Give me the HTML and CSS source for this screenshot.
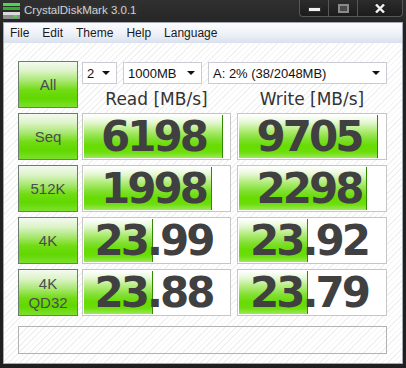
FILE: index.html
```html
<!DOCTYPE html>
<html lang="en">
<head>
<meta charset="UTF-8" />
<title>CrystalDiskMark 3.0.1</title>
<link rel="stylesheet" href="styles.css">
</head>
<body>
<div class="window">
  <div class="titlebar">
    <svg class="app-icon" width="17" height="17" viewBox="0 0 17 17">
      <rect x="0" y="0" width="17" height="3" fill="#4cd84c"/>
      <rect x="0" y="4" width="17" height="3" fill="#2fae2f"/>
      <rect x="0" y="9" width="17" height="7" rx="1" fill="#8e8e8e"/>
      <rect x="0" y="9" width="17" height="3" fill="#dcdcdc"/>
      <rect x="11" y="12" width="3" height="2" fill="#48e048"/>
    </svg>
    <span class="title">CrystalDiskMark 3.0.1</span>
    <div class="caption">
      <span class="cb"><i class="glyph-min"></i></span>
      <span class="cb"><i class="glyph-max"></i></span>
      <span class="cb close">
        <svg width="10" height="9" viewBox="0 0 10 9"><path d="M1 0.5 L9 8.5 M9 0.5 L1 8.5" stroke="#f2f2f2" stroke-width="2.4"/></svg>
      </span>
    </div>
  </div>

  <div class="client">
    <div class="menubar">
      <span>File</span><span>Edit</span><span>Theme</span><span>Help</span><span>Language</span>
    </div>

    <div class="main">
      <div class="grid">
        <div class="test-btn">All</div>
        <div class="controls">
          <div class="combos">
            <div class="combo combo-count"><span>2</span><i class="arrow"></i></div>
            <div class="combo combo-size"><span>1000MB</span><i class="arrow"></i></div>
            <div class="combo combo-drive"><span>A: 2% (38/2048MB)</span><i class="arrow"></i></div>
          </div>
          <div class="labels">
            <div>Read [MB/s]</div>
            <div>Write [MB/s]</div>
          </div>
        </div>

        <div class="test-btn">Seq</div>
        <div class="result read"><div class="bar" style="width:94.6%"></div><span class="value">6198</span></div>
        <div class="result write"><div class="bar" style="width:93.9%"></div><span class="value">9705</span></div>

        <div class="test-btn">512K</div>
        <div class="result read"><div class="bar" style="width:87.1%"></div><span class="value">1998</span></div>
        <div class="result write"><div class="bar" style="width:86.5%"></div><span class="value">2298</span></div>

        <div class="test-btn">4K</div>
        <div class="result read"><div class="bar" style="width:46.9%"></div><span class="value">23.99</span></div>
        <div class="result write"><div class="bar" style="width:46.6%"></div><span class="value">23.92</span></div>

        <div class="test-btn two-line">4K<br>QD32</div>
        <div class="result read"><div class="bar" style="width:46.9%"></div><span class="value">23.88</span></div>
        <div class="result write"><div class="bar" style="width:46.6%"></div><span class="value">23.79</span></div>
      </div>

      <div class="status"></div>
    </div>
  </div>
</div>
</body>
</html>
```

FILE: styles.css
```css
body {
  margin: 0;
  background: #1e1e1e;
  font-family: "Liberation Sans", Arial, sans-serif;
}

.window {
  width: 406px;
  height: 368px;
  display: flex;
  flex-direction: column;
  background: linear-gradient(#303030, #222 30px, #1f1f1f);
  overflow: hidden;
}

/* title bar */
.titlebar {
  height: 22px;
  display: flex;
  align-items: flex-start;
  flex-shrink: 0;
}

.app-icon {
  margin: 3px 0 0 3px;
}

.title {
  margin-left: 4px;
  line-height: 20px;
  font-size: 11.5px;
  color: #d2d2d2;
  text-shadow: 0 0 6px rgba(255, 255, 255, 0.18);
}

.caption {
  margin-left: auto;
  margin-right: 3px;
  display: flex;
  height: 16px;
  border: 1px solid #575757;
  border-top: none;
  border-radius: 0 0 4px 4px;
  background: linear-gradient(#2c2c2c, #1c1c1c);
}

.cb {
  width: 28px;
  display: flex;
  align-items: center;
  justify-content: center;
  border-right: 1px solid #575757;
}

.cb.close {
  width: 44px;
  border-right: none;
}

.glyph-min {
  width: 11px;
  height: 3px;
  margin-top: 3px;
  background: #f0f0f0;
  border: 1px solid #333;
}

.glyph-max {
  width: 7px;
  height: 5px;
  border: 2px solid #8a8a8a;
  background: #4a4a4a;
}

/* client area */
.client {
  flex: 1;
  margin: 0 3px 4px 3px;
  border: 1px solid #a4a9b3;
  background: repeating-linear-gradient(135deg, #ffffff 0 3px, #f1f1f1 3px 4px);
}

.menubar {
  height: 20px;
  display: flex;
  align-items: center;
  gap: 13px;
  padding-left: 6px;
  font-size: 12px;
  color: #1a1a1a;
  background: linear-gradient(#fbfcfe, #eef1f8 55%, #d9e0ee);
}

.main {
  padding: 18px 0 0 14px;
}

.grid {
  display: grid;
  grid-template-columns: 64px 155px 150px;
  grid-auto-rows: 47px;
  row-gap: 5px;
}

.test-btn {
  width: 60px;
  height: 47px;
  box-sizing: border-box;
  border: 1px solid #6c7c70;
  background: linear-gradient(#f4faf0 0%, #dcf3c8 20%, #a8e870 42%, #72dc14 62%, #60d800 80%, #7ce02c 100%);
  display: flex;
  align-items: center;
  justify-content: center;
  text-align: center;
  font-size: 15px;
  color: #4b4b50;
}

.test-btn.two-line {
  line-height: 19px;
}

.controls {
  grid-column: 2 / 4;
  display: flex;
  flex-direction: column;
}

.combos {
  display: flex;
  gap: 6px;
  margin-top: 1px;
}

.combo {
  height: 22px;
  box-sizing: border-box;
  border: 1px solid #c9ccd2;
  background: #fff;
  display: flex;
  align-items: center;
  padding: 0 6px 0 4px;
  font-size: 13px;
  color: #111;
}

.combo span {
  flex: 1;
}

.combo-count { width: 35px; }
.combo-size { width: 79px; }
.combo-drive { width: 179px; }

.arrow {
  width: 0;
  height: 0;
  border-left: 4px solid transparent;
  border-right: 4px solid transparent;
  border-top: 4px solid #111;
}

.labels {
  display: grid;
  grid-template-columns: 149px 150px;
  column-gap: 6px;
  padding-top: 4px;
  font-family: "DejaVu Sans", sans-serif;
  font-size: 17px;
  line-height: 22px;
  color: #333;
  text-align: center;
}

.result {
  position: relative;
  height: 47px;
  box-sizing: border-box;
  border: 1px solid #c6c6c6;
  background: #fff;
  display: flex;
  align-items: center;
  justify-content: center;
  padding-right: 6px;
}

.result.read { width: 149px; }
.result.write { width: 150px; }

.bar {
  position: absolute;
  top: 1px;
  bottom: 1px;
  left: 1px;
  box-sizing: border-box;
  border-right: 1px solid #2f8a00;
  background: linear-gradient(#ffffff 0%, #e6f8d6 16%, #b2ec7a 36%, #82e034 55%, #66dc00 72%, #6cde0a 86%, #9ce85a 100%);
}

.value {
  position: relative;
  font-family: "DejaVu Sans", sans-serif;
  font-weight: bold;
  font-size: 42px;
  letter-spacing: -3px;
  line-height: 45px;
  color: #404040;
}

.status {
  margin-top: 10px;
  width: 369px;
  height: 28px;
  box-sizing: border-box;
  border: 1px solid #b2b2b2;
}
```
